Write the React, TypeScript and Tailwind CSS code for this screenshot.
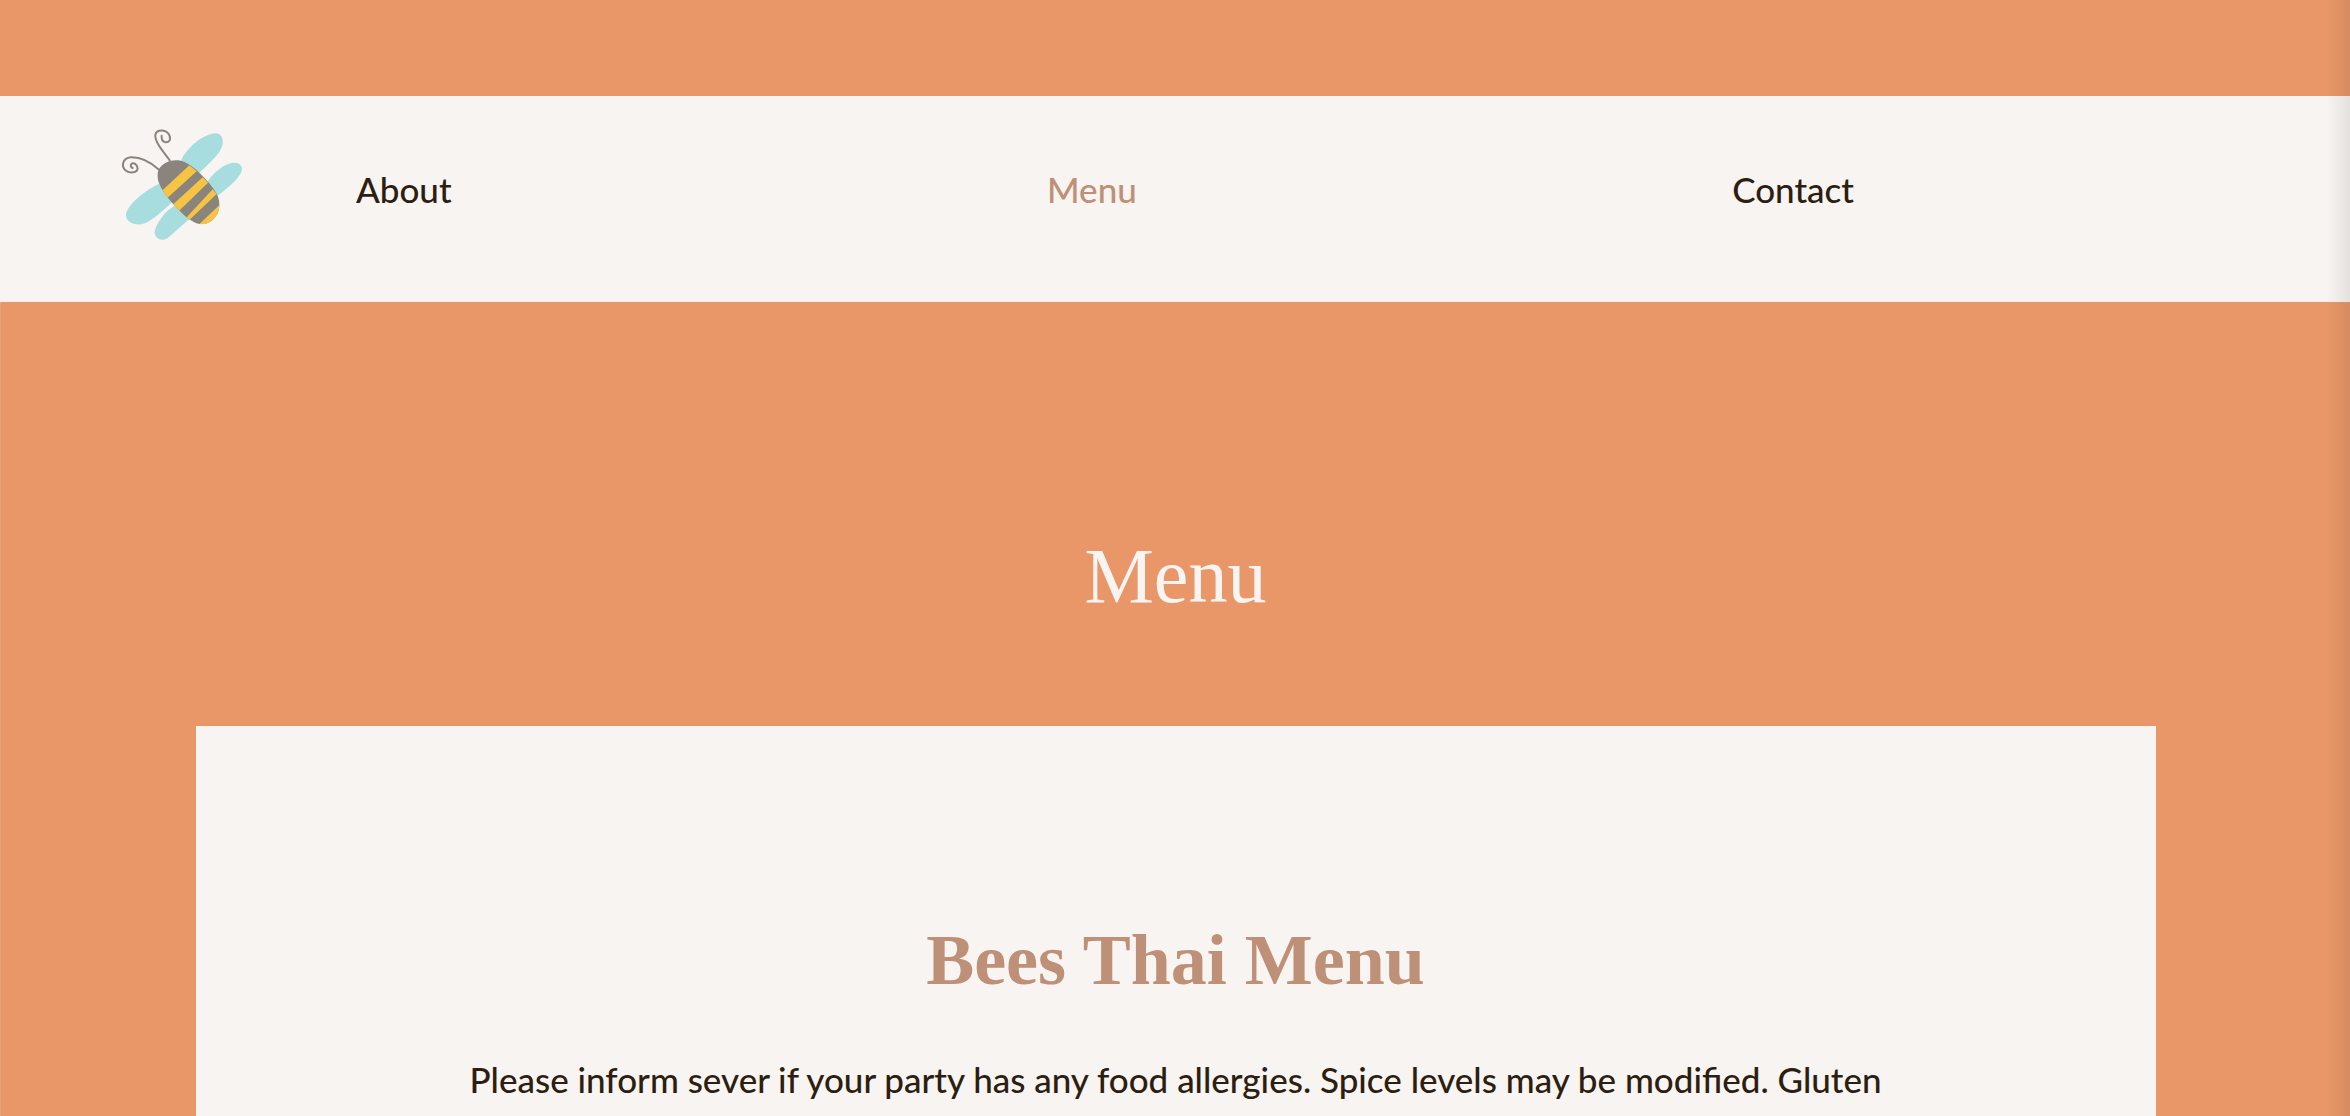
function BeeLogo() {
  return (
    <svg viewBox="0 0 480 420" className="h-[140px] w-[160px]" role="img" aria-label="Bees Thai">
      <g fill="#a8dddf">
        <path d="M242 156C252 125 300 75 344 70C362 69 371 82 368 102C363 132 322 165 296 190Z" />
        <path d="M322 216C338 190 374 158 404 158C422 158 430 172 424 186C414 210 380 236 352 258Z" />
        <path d="M178 221C140 237 84 282 78 312C76 334 98 345 124 343C152 338 190 300 220 274Z" />
        <path d="M224 288C198 300 164 344 164 370C168 388 184 393 200 386C222 370 244 346 270 326Z" />
      </g>
      <clipPath id="bee-body">
        <path d="M176 178C190 156 214 148 236 151C262 155 286 176 310 200C338 230 362 258 358 290C354 324 326 346 298 342C270 336 238 304 206 266C182 236 164 204 176 178Z" />
      </clipPath>
      <g clipPath="url(#bee-body)">
        <rect x="160" y="140" width="210" height="210" fill="#8a847c" />
        <g fill="#f6c444">
          <path d="M186 242L268 166L290 184L202 264Z" />
          <path d="M218 284L308 202L324 218L236 304Z" />
          <path d="M258 324L338 238L350 252L268 330Z" />
          <path d="M292 348L364 280L370 350Z" />
        </g>
      </g>
      <g fill="none" stroke="#8a847c" strokeWidth="6" strokeLinecap="round">
        <path d="M209 151C186 120 164 96 166 74C170 58 196 58 206 72C216 90 206 98 196 97C186 94 184 86 185 77" />
        <path d="M175 178C150 155 120 141 92 142C66 146 64 168 76 181C90 193 112 187 113 175C112 162 100 156 94 162C91 167 92 172 98 174" />
      </g>
    </svg>
  );
}

const links = [
  { label: "About", current: false },
  { label: "Menu", current: true },
  { label: "Contact", current: false },
];

export default function App() {
  return (
    <div className="relative h-screen overflow-hidden bg-[#e99768] pt-24 font-[Lato,sans-serif] font-medium text-[#2c1f12]">
      <header className="flex h-[206px] items-start bg-[#f8f4f1] pt-[14px] pl-[100px]">
        <a href="#home">
          <BeeLogo />
        </a>
        <nav className="flex flex-1 justify-between pt-[54px] pr-[496px] pl-24 text-[35px] leading-[50px]">
          {links.map((link) => (
            <a
              key={link.label}
              href={"#" + link.label.toLowerCase()}
              aria-current={link.current ? "page" : undefined}
              className="aria-[current=page]:text-[#bd9077]"
            >
              {link.label}
            </a>
          ))}
        </nav>
      </header>
      <main className="border-l border-[#eba27a]">
        <h1 className="pt-[228px] pb-[104px] text-center font-['Liberation_Serif',serif] text-[78px] leading-[92px] text-[#f8f4f1]">
          Menu
        </h1>
        <section className="mx-auto max-w-[1960px] bg-[#f8f4f1] px-[270px] pt-[190px] pb-24 text-center">
          <h2 className="font-['Liberation_Serif',serif] text-[72px] leading-[88px] font-bold text-[#bd9077]">
            Bees Thai Menu
          </h2>
          <p className="pt-[50px] text-[35px] leading-[50px]">
            Please inform sever if your party has any food allergies. Spice levels may be modified. Gluten
          </p>
        </section>
      </main>
      <div className="pointer-events-none absolute inset-y-0 right-0 w-6 bg-linear-to-r from-transparent to-black/8" />
    </div>
  );
}
